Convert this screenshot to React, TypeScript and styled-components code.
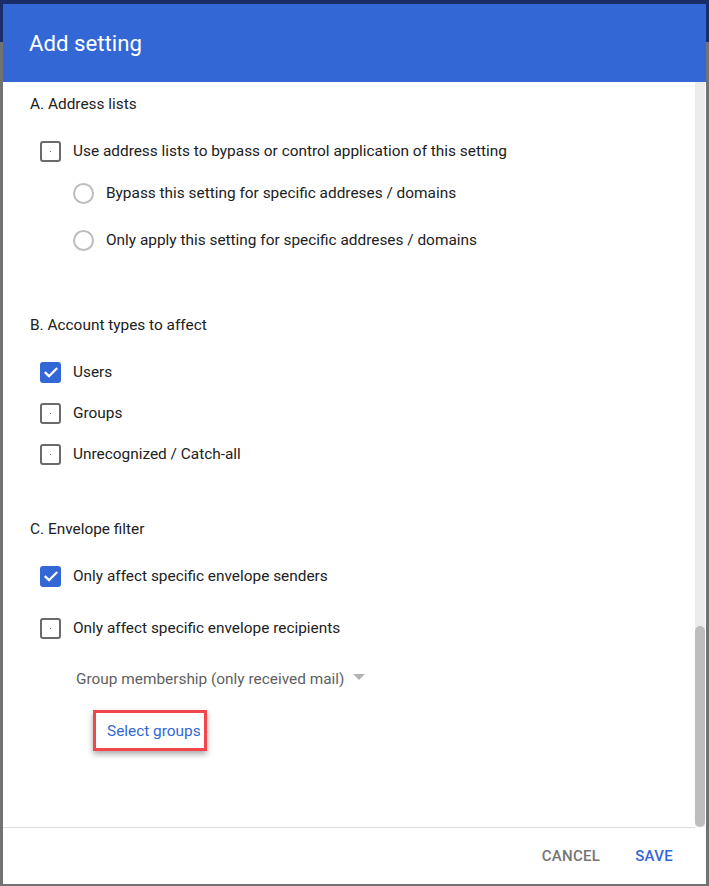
import React from "react";
import styled, { createGlobalStyle } from "styled-components";

const Global = createGlobalStyle`
  html, body { margin: 0; padding: 0; }
  body {
    width: 709px;
    height: 886px;
    overflow: hidden;
    background: linear-gradient(#1b2d66 0, #1b2d66 42px, #727272 42px);
    font-family: Roboto, "Noto Sans", "Liberation Sans", sans-serif;
  }
`;

const Dialog = styled.div`
  margin: 4px 3px 0 3px;
  width: 703px;
  height: 880px;
  background: #fff;
  display: flex;
  flex-direction: column;
  overflow: hidden;
`;

const Header = styled.header`
  height: 78px;
  flex: none;
  background: #3367d6;
  display: flex;
  align-items: center;
  padding-left: 26px;
  color: #fff;
  font-size: 22.2px;
  font-weight: 400;
`;

const Body = styled.div`
  flex: 1;
  display: flex;
  min-height: 0;
`;

const Content = styled.div`
  flex: 1;
  padding: 12px 0 0 27px;
  color: #212121;
  font-size: 15.4px;
`;

const Track = styled.div`
  width: 10px;
  flex: none;
  background: #ececec;
  display: flex;
  flex-direction: column;
  justify-content: flex-end;
  margin-right: 1px;
`;

const Thumb = styled.div`
  height: 201px;
  border-radius: 5px;
  background: #bdbdbd;
`;

const Heading = styled.div<{ $top: number }>`
  margin-top: ${(p) => p.$top}px;
  height: 20px;
  line-height: 20px;
`;

const Row = styled.label<{ $top: number }>`
  margin-top: ${(p) => p.$top}px;
  height: 24px;
  display: flex;
  align-items: center;
  gap: 12px;
`;

const Box = styled.span<{ $checked?: boolean }>`
  width: 21px;
  height: 21px;
  box-sizing: border-box;
  margin-left: 10px;
  border-radius: 3px;
  flex: none;
  display: flex;
  align-items: center;
  justify-content: center;
  background: ${(p) => (p.$checked ? "#3367d6" : "#fff")};
  border: ${(p) => (p.$checked ? "none" : "2px solid #6a6a6a")};
`;

const Dot = styled.span`
  width: 1px;
  height: 1px;
  background: #777;
`;

const Radio = styled.span`
  width: 21px;
  height: 21px;
  box-sizing: border-box;
  margin-left: 43px;
  border-radius: 50%;
  border: 2px solid #bdbdbd;
  flex: none;
`;

const Dropdown = styled.div`
  margin: 27px 0 0 46px;
  height: 24px;
  display: flex;
  align-items: center;
  gap: 9px;
  color: #5f5f5f;
`;

const Caret = styled.span`
  width: 0;
  height: 0;
  border-left: 6px solid transparent;
  border-right: 6px solid transparent;
  border-top: 6px solid #b3b3b3;
  margin-top: -4px;
`;

const LinkBox = styled.div`
  margin: 19px 0 0 63px;
  width: 114px;
  height: 41px;
  box-sizing: border-box;
  border: 3px solid #f0464c;
  box-shadow: 0 3px 6px rgba(0, 0, 0, 0.35);
  display: flex;
  align-items: center;
  padding-left: 11px;
  color: #3367d6;
`;

const Footer = styled.footer`
  height: 56px;
  flex: none;
  border-top: 1px solid #dcdcdc;
  margin-right: 11px;
  display: flex;
  align-items: center;
  justify-content: flex-end;
  gap: 35px;
  padding-right: 22px;
`;

const FooterButton = styled.button<{ $primary?: boolean }>`
  border: none;
  background: none;
  padding: 0;
  font-family: Roboto, "Noto Sans", "Liberation Sans", sans-serif;
  font-size: 15px;
  font-weight: 500;
  letter-spacing: 0.3px;
  color: ${(p) => (p.$primary ? "#3367d6" : "#757575")};
`;

const Check = () => (
  <svg width="18" height="18" viewBox="0 0 18 18">
    <path d="M2.8 9.2 L7 13.2 L15.2 5" fill="none" stroke="#fff" strokeWidth="2.3" />
  </svg>
);

const CheckRow = ({ top, checked, children }: { top: number; checked?: boolean; children: React.ReactNode }) => (
  <Row $top={top}>
    <Box $checked={checked}>{checked ? <Check /> : <Dot />}</Box>
    {children}
  </Row>
);

const RadioRow = ({ top, children }: { top: number; children: React.ReactNode }) => (
  <Row $top={top}>
    <Radio />
    {children}
  </Row>
);

export default function App() {
  return (
    <>
      <Global />
      <Dialog>
        <Header>Add setting</Header>
        <Body>
          <Content>
            <Heading $top={0}>A. Address lists</Heading>
            <CheckRow top={25}>Use address lists to bypass or control application of this setting</CheckRow>
            <RadioRow top={18}>Bypass this setting for specific addreses / domains</RadioRow>
            <RadioRow top={23}>Only apply this setting for specific addreses / domains</RadioRow>

            <Heading $top={63}>B. Account types to affect</Heading>
            <CheckRow top={25} checked>Users</CheckRow>
            <CheckRow top={17}>Groups</CheckRow>
            <CheckRow top={17}>Unrecognized / Catch-all</CheckRow>

            <Heading $top={53}>C. Envelope filter</Heading>
            <CheckRow top={25} checked>Only affect specific envelope senders</CheckRow>
            <CheckRow top={28}>Only affect specific envelope recipients</CheckRow>
            <Dropdown>
              Group membership (only received mail)
              <Caret />
            </Dropdown>
            <LinkBox>Select groups</LinkBox>
          </Content>
          <Track>
            <Thumb />
          </Track>
        </Body>
        <Footer>
          <FooterButton>CANCEL</FooterButton>
          <FooterButton $primary>SAVE</FooterButton>
        </Footer>
      </Dialog>
    </>
  );
}
